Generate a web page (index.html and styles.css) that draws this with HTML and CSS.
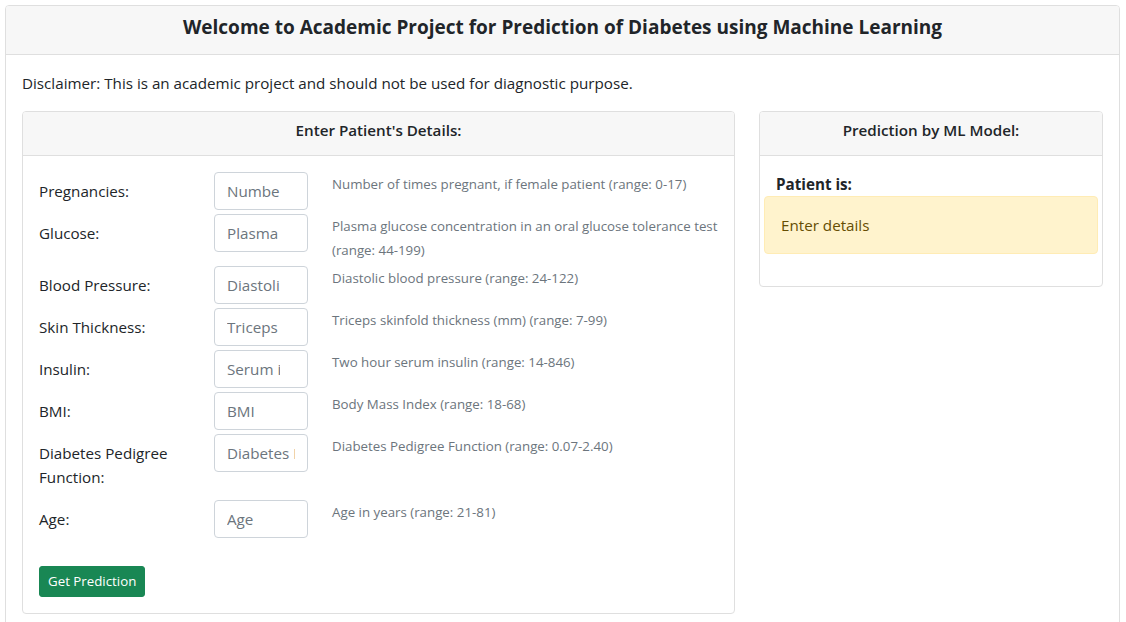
FILE: index.html
```html
<!DOCTYPE html>
<html lang="en">
<head>
<meta charset="utf-8">
<title>Diabetes Prediction</title>
<link rel="stylesheet" href="styles.css">
</head>
<body>
<div class="page">
  <div class="card">
    <div class="card-header main-header">
      <h5 class="main-title">Welcome to Academic Project for Prediction of Diabetes using Machine Learning</h5>
    </div>
    <div class="card-body">
      <p class="disclaimer">Disclaimer: This is an academic project and should not be used for diagnostic purpose.</p>
      <div class="columns">
        <div class="card details">
          <div class="card-header"><h6 class="sub-title">Enter Patient's Details:</h6></div>
          <div class="card-body">
            <form class="form">
              <div class="form-row">
                <label class="form-label">Pregnancies:</label>
                <input class="form-input num" type="text" placeholder="Number of pregnancies">
                <small class="form-help">Number of times pregnant, if female patient (range: 0-17)</small>
              </div>
              <div class="form-row">
                <label class="form-label">Glucose:</label>
                <input class="form-input num" type="text" placeholder="Plasma glucose">
                <small class="form-help">Plasma glucose concentration in an oral glucose tolerance test<br>(range: 44-199)</small>
              </div>
              <div class="form-row">
                <label class="form-label">Blood Pressure:</label>
                <input class="form-input num" type="text" placeholder="Diastolic blood pressure">
                <small class="form-help">Diastolic blood pressure (range: 24-122)</small>
              </div>
              <div class="form-row">
                <label class="form-label">Skin Thickness:</label>
                <input class="form-input num" type="text" placeholder="Triceps skinfold thickness">
                <small class="form-help">Triceps skinfold thickness (mm) (range: 7-99)</small>
              </div>
              <div class="form-row">
                <label class="form-label">Insulin:</label>
                <input class="form-input num" type="text" placeholder="Serum insulin">
                <small class="form-help">Two hour serum insulin (range: 14-846)</small>
              </div>
              <div class="form-row">
                <label class="form-label">BMI:</label>
                <input class="form-input num" type="text" placeholder="BMI">
                <small class="form-help">Body Mass Index (range: 18-68)</small>
              </div>
              <div class="form-row">
                <label class="form-label">Diabetes Pedigree Function:</label>
                <input class="form-input" type="text" placeholder="Diabetes Pedigree Function">
                <small class="form-help">Diabetes Pedigree Function (range: 0.07-2.40)</small>
              </div>
              <div class="form-row">
                <label class="form-label">Age:</label>
                <input class="form-input num" type="text" placeholder="Age">
                <small class="form-help">Age in years (range: 21-81)</small>
              </div>
              <button class="btn-success" type="button">Get Prediction</button>
            </form>
          </div>
        </div>
        <div class="card result">
          <div class="card-header"><h6 class="sub-title">Prediction by ML Model:</h6></div>
          <div class="card-body">
            <div class="result-label">Patient is:</div>
            <div class="alert-warning">Enter details</div>
          </div>
        </div>
      </div>
    </div>
  </div>
</div>
</body>
</html>
```

FILE: styles.css
```css
* { box-sizing: border-box; }
html, body { margin: 0; padding: 0; }
body {
  font-family: "Segoe UI", "Open Sans", "Noto Sans", sans-serif;
  font-size: 15.2px;
  line-height: 24px;
  color: #212529;
  background: #fff;
}
.page { padding: 5px 6px 5px 5px; }
.card {
  border: 1px solid #dfdfdf;
  border-radius: 4px;
  background: #fff;
}
.card-header {
  background: #f7f7f7;
  border-bottom: 1px solid #dfdfdf;
  padding: 8px 16px;
  text-align: center;
  border-radius: 3px 3px 0 0;
}
.main-title {
  margin: 0 0 8px;
  padding-top: 2px;
  font-size: 19px;
  line-height: 22px;
  font-weight: 700;
}
.sub-title {
  margin: 0 0 8px;
  padding-top: 1px;
  font-size: 15.2px;
  line-height: 18px;
  font-weight: 600;
}
.card-body { padding: 16px; }
.disclaimer { margin: 0 0 16px; }
.columns {
  display: grid;
  grid-template-columns: 713px 1fr;
  column-gap: 24px;
  align-items: start;
}
.form-row {
  display: grid;
  grid-template-columns: 175px 94px 1fr;
  align-items: start;
  margin-bottom: 4px;
}
.form-label {
  padding: 7px 0;
  line-height: 24px;
}
.form-input {
  width: 94px;
  height: 38px;
  padding: 6px 12px;
  font: inherit;
  font-size: 15.2px;
  color: #212529;
  border: 1px solid #ced4da;
  border-radius: 4px;
  background: #fff;
  outline: none;
}
.form-input.num { padding-right: 27px; }
.form-input::placeholder { color: #6c757d; opacity: 1; }
.form-help {
  padding-left: 24px;
  font-size: 13.3px;
  line-height: 24px;
  color: #6c757d;
  white-space: nowrap;
}
.btn-success {
  margin-top: 24px;
  padding: 4px 8px;
  font: inherit;
  font-size: 13.3px;
  line-height: 21px;
  color: #fff;
  background: #198754;
  border: 1px solid #198754;
  border-radius: 3px;
}
.result-label { font-weight: 700; }
.alert-warning {
  margin: 0 -12px 16px;
  padding: 16px;
  color: #664d03;
  background: #fff3cd;
  border: 1px solid #ffecb5;
  border-radius: 4px;
}
```
